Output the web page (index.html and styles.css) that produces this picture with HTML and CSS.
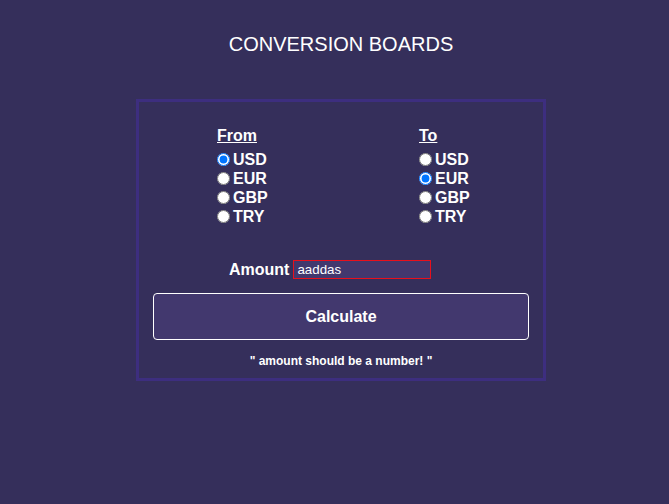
FILE: index.html
```html
<!DOCTYPE html>
<html>
<head>
<meta charset="utf-8">
<link rel="stylesheet" href="styles.css">
</head>
<body>
<main class="page">
  <h1 class="title">CONVERSION BOARDS</h1>
  <section class="board">
    <div class="columns">
      <div class="col">
        <h3 class="col-head">From</h3>
        <label class="opt"><input type="radio" name="from" checked>USD</label>
        <label class="opt"><input type="radio" name="from">EUR</label>
        <label class="opt"><input type="radio" name="from">GBP</label>
        <label class="opt"><input type="radio" name="from">TRY</label>
      </div>
      <div class="col">
        <h3 class="col-head">To</h3>
        <label class="opt"><input type="radio" name="to">USD</label>
        <label class="opt"><input type="radio" name="to" checked>EUR</label>
        <label class="opt"><input type="radio" name="to">GBP</label>
        <label class="opt"><input type="radio" name="to">TRY</label>
      </div>
    </div>
    <div class="amount-row">
      <label class="amount-label" for="amt">Amount</label>
      <input id="amt" class="amount-input" type="text" value="aaddas">
    </div>
    <button class="calc">Calculate</button>
    <p class="error">" amount should be a number! "</p>
  </section>
</main>
</body>
</html>
```
FILE: styles.css
```css
html, body {
  margin: 0;
  padding: 0;
  background: #352f5b;
}
body {
  font-family: "Liberation Sans", Arial, sans-serif;
  color: #ffffff;
}
.page {
  width: 669px;
  height: 504px;
  box-sizing: border-box;
  padding-left: 13px;
  padding-top: 33px;
  display: flex;
  flex-direction: column;
  align-items: center;
}
.title {
  margin: 0;
  font-size: 20px;
  font-weight: normal;
  line-height: 23px;
}
.board {
  margin-top: 43px;
  width: 410px;
  box-sizing: border-box;
  border: 3px solid #3d2e7f;
  padding: 24px 14px 10px 14px;
}
.columns {
  display: grid;
  grid-template-columns: 202px auto;
  padding-left: 64px;
}
.col {
  display: flex;
  flex-direction: column;
  align-items: flex-start;
}
.col-head {
  margin: 0 0 5px 0;
  font-size: 16px;
  font-weight: bold;
  line-height: 19px;
  text-decoration: underline;
}
.opt {
  display: flex;
  align-items: center;
  font-size: 16px;
  font-weight: bold;
  line-height: 19px;
}
.opt input {
  margin: 0 3px 0 0;
  width: 13px;
  height: 13px;
}
.amount-row {
  margin-top: 34px;
  display: flex;
  align-items: center;
  padding-left: 76px;
}
.amount-label {
  font-size: 16px;
  font-weight: bold;
  line-height: 19px;
  margin-right: 4px;
}
.amount-input {
  width: 138px;
  height: 19px;
  box-sizing: border-box;
  border: 1px solid #e8101c;
  background: #42386e;
  color: #ffffff;
  font-family: "Liberation Sans", Arial, sans-serif;
  font-size: 13.33px;
  padding: 0 3px;
  outline: none;
}
.calc {
  display: block;
  margin-top: 14px;
  width: 100%;
  height: 47px;
  background: #42386e;
  border: 1px solid #ffffff;
  border-radius: 4px;
  color: #ffffff;
  font-family: "Liberation Sans", Arial, sans-serif;
  font-size: 16px;
  font-weight: bold;
}
.error {
  margin: 14px 0 0 0;
  text-align: center;
  font-size: 12px;
  font-weight: bold;
  line-height: 14px;
}
```
